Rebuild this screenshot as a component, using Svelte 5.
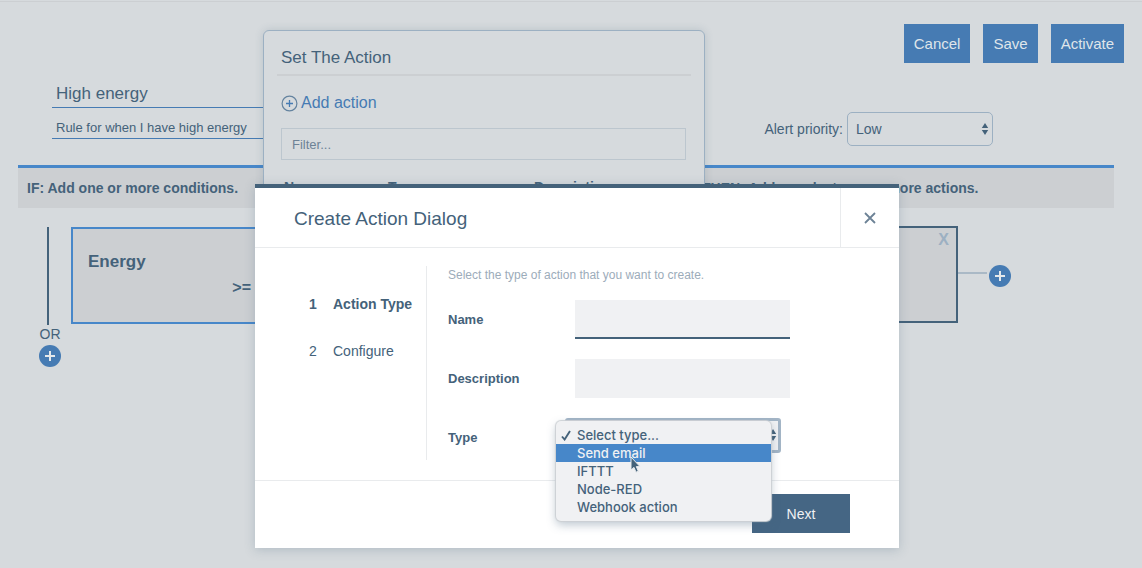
<script>
  let actionName = $state('');
  let actionDescription = $state('');
  let ruleName = $state('High energy');
  let ruleText = $state('Rule for when I have high energy');
  let filter = $state('');
  const types = ['Select type...', 'Send email', 'IFTTT', 'Node-RED', 'Webhook action'];
  const highlighted = 1;
</script>

{#snippet plus()}
  <svg width="22" height="22" viewBox="0 0 22 22" aria-hidden="true">
    <circle cx="11" cy="11" r="11" fill="#467bb3" />
    <path d="M11 6v10M6 11h10" stroke="#e4e8eb" stroke-width="2" />
  </svg>
{/snippet}

{#snippet arrows()}
  <svg class="arrows" width="8" height="14" viewBox="0 0 8 14" aria-hidden="true">
    <path d="M4 1l3.2 5H.8zM4 13L.8 8h6.4z" fill="#44627a" />
  </svg>
{/snippet}

<div class="page">
  <div class="toolbar">
    <button>Cancel</button>
    <button>Save</button>
    <button>Activate</button>
  </div>

  <div class="rule">
    <div class="names">
      <input class="rule-name" aria-label="Rule name" bind:value={ruleName} />
      <input class="rule-text" aria-label="Rule description" bind:value={ruleText} />
    </div>
    <div class="priority">
      <label for="priority">Alert priority:</label>
      <span class="select">
        <select id="priority"><option>Low</option><option>Medium</option><option>High</option></select>
        {@render arrows()}
      </span>
    </div>
  </div>

  <div class="heads">
    <h2>IF: Add one or more conditions.</h2>
    <h2>THEN: Add or select one or more actions.</h2>
  </div>

  <div class="flow">
    <div class="or">
      <div class="stem"></div>
      <span>OR</span>
      <button class="round" aria-label="Add OR condition">{@render plus()}</button>
    </div>
    <div class="card condition">
      <strong>Energy</strong>
      <span class="operator">&gt;=</span>
    </div>
    <div class="card then">
      <button class="remove" aria-label="Remove action">X</button>
    </div>
    <div class="connector"></div>
    <button class="round after" aria-label="Add action">{@render plus()}</button>
  </div>

  <section class="panel">
    <h2>Set The Action</h2>
    <button class="add">
      <svg width="17" height="17" viewBox="0 0 17 17" fill="none" aria-hidden="true">
        <circle cx="8.500" cy="8.500" r="7.400" stroke="#64839f" stroke-width="1.200" />
        <path d="M8.500 5v7M5 8.500h7" stroke="#467bb3" stroke-width="1.300" />
      </svg>
      Add action
    </button>
    <input class="filter" aria-label="Filter actions" placeholder="Filter..." bind:value={filter} />
    <table>
      <thead><tr><th>Name</th><th>Type</th><th>Description</th></tr></thead>
    </table>
  </section>

  <div class="overlay">
    <div class="dialog" role="dialog" aria-labelledby="dialog-title">
      <header>
        <h1 id="dialog-title">Create Action Dialog</h1>
        <button class="close" aria-label="Close">
          <svg width="12" height="12" viewBox="0 0 12 12" aria-hidden="true">
            <path d="M1 1l10 10M11 1L1 11" stroke="#6d8296" stroke-width="1.800" />
          </svg>
        </button>
      </header>
      <div class="body">
        <ol>
          <li class="current"><span>1</span>Action Type</li>
          <li><span>2</span>Configure</li>
        </ol>
        <form>
          <p>Select the type of action that you want to create.</p>
          <div class="field">
            <label for="name">Name</label>
            <input id="name" class="active" bind:value={actionName} />
          </div>
          <div class="field">
            <label for="description">Description</label>
            <input id="description" bind:value={actionDescription} />
          </div>
          <div class="field">
            <label for="type">Type</label>
            <span class="select type">
              <select id="type">{#each types as type}<option>{type}</option>{/each}</select>
              {@render arrows()}
              <ul class="menu" role="listbox" aria-label="Type">
                {#each types as type, i}
                  <li role="option" aria-selected={i === 0} class:highlight={i === highlighted}>
                    <span class="mark">
                      {#if i === 0}
                        <svg width="10" height="11" viewBox="0 0 10 11" fill="none" aria-hidden="true">
                          <path d="M1 6.500L3.600 9.500 9 1" stroke="#44627a" stroke-width="1.900" />
                        </svg>
                      {/if}
                    </span>
                    {type}
                  </li>
                {/each}
              </ul>
              <svg class="pointer" width="11" height="18" viewBox="0 0 11 18" aria-hidden="true">
                <path d="M1 1v13l3-2.600 2 4.800 2.300-1-2-4.600H10z" fill="#44627a" stroke="#e8ebee" stroke-width="1" />
              </svg>
            </span>
          </div>
        </form>
      </div>
      <footer><button class="next">Next</button></footer>
    </div>
  </div>
</div>

<style>
  :global(body) {
    margin: 0;
    background: #d6dadd;
  }
  .page, .page * { box-sizing: border-box; }
  .page {
    position: relative;
    min-height: 100vh;
    padding: 24px 18px 0;
    overflow: hidden;
    color: #44627a;
    background: #d6dadd;
    font: 14px/18px "Liberation Sans", Arial, sans-serif;
  }
  .page::before {
    content: "";
    position: absolute;
    inset: 1px 0 auto;
    height: 1px;
    background: #cccfd2;
  }
  h1, h2, p, ol, ul { margin: 0; padding: 0; font-weight: 400; list-style: none; }
  button, input, select { font: inherit; color: inherit; border: 0; border-radius: 0; padding: 0; margin: 0; background: none; outline: 0; }
  svg { display: block; }

  .toolbar { display: flex; justify-content: flex-end; gap: 13px; }
  .toolbar button {
    height: 39px;
    padding: 0 10px;
    color: #dfe5ea;
    background: #467bb3;
    font-size: 15px;
  }

  .rule { display: flex; justify-content: space-between; padding: 17px 131px 0 34px; }
  .names { display: flex; flex-direction: column; width: 300px; }
  .names input { padding: 0 4px; border-bottom: 1px solid #467bb3; }
  .names .rule-name { height: 28px; font-size: 17px; }
  .names .rule-text { height: 31px; padding-top: 8px; font-size: 13px; }
  .priority { display: flex; align-items: center; gap: 4px; height: 34px; margin-top: 32px; }
  .select { position: relative; display: block; }
  select { appearance: none; width: 146px; height: 34px; padding: 0 8px; border: 1px solid #9cb0c2; border-radius: 5px; }
  .arrows { position: absolute; right: 4px; top: 10px; }

  .heads {
    display: grid;
    grid-template-columns: 684px 1fr;
    align-items: center;
    height: 43px;
    margin: 19px 10px 0 0;
    border-top: 3px solid #4787c9;
    background: #cccfd2;
  }
  .heads h2 { font-size: 14px; font-weight: 700; white-space: nowrap; }
  .heads h2:first-child { padding-left: 9px; }

  .flow { display: flex; padding: 18px 113px 0 19px; }
  .or { display: flex; flex-direction: column; align-items: center; width: 26px; margin: 1px 8px 0 0; }
  .stem { width: 2px; height: 98px; margin-right: 5px; background: #44627a; }
  .or .round { margin-top: 2px; }
  .card { height: 97px; background: #cccfd2; border: 2px solid #44627a; }
  .condition { display: flex; flex-direction: column; width: 260px; margin-top: 1px; padding: 24px 78px 0 15px; border-color: #4787c9; }
  .condition strong { font-size: 17px; }
  .operator { align-self: flex-end; margin-top: 8px; font-size: 16px; font-weight: 700; }
  .then { display: flex; flex: 1; justify-content: flex-end; align-items: flex-start; margin-left: 300px; padding: 3px 7px; }
  .remove { color: #9cb0c2; font-size: 16px; font-weight: 700; }
  .connector { width: 29px; height: 2px; margin: 46px 2px 0 0; background: #aab9c6; }
  .after { align-self: flex-start; margin-top: 39px; }

  .panel {
    position: absolute;
    left: 263px;
    top: 30px;
    width: 442px;
    padding: 15px 13px 40px;
    border: 1px solid #9cb0c2;
    border-radius: 6px;
    background: #d6dadd;
    box-shadow: 0 0 8px rgba(68, 98, 122, .2);
  }
  .panel h2 { height: 30px; padding-left: 4px; border-bottom: 2px solid #cccfd2; font-size: 17px; line-height: 24px; }
  .add { display: flex; align-items: center; gap: 3px; margin: 18px 4px 16px; color: #467bb3; font-size: 16px; }
  .filter { display: block; width: calc(100% - 9px); height: 32px; margin-left: 4px; padding: 0 10px; border: 1px solid #bcc6ce; font-size: 13px; }
  .filter::placeholder { color: #6d8296; opacity: 1; }
  table { width: 100%; margin-top: 18px; border-spacing: 0; table-layout: fixed; }
  th { padding: 0 0 0 7px; text-align: left; font-size: 14px; }
  th:first-child { width: 104px; }
  th:nth-child(2) { width: 146px; }

  .overlay { position: absolute; inset: 0; display: flex; justify-content: center; align-items: flex-start; padding: 184px 0 0 12px; }
  .dialog { width: 644px; border-top: 4px solid #44627a; background: #fff; box-shadow: 0 2px 10px rgba(68, 98, 122, .25); }
  header { display: flex; height: 60px; border-bottom: 1px solid #e9ebed; }
  h1 { flex: 1; padding: 19px 39px 0; font-size: 19px; line-height: 24px; }
  .close { display: grid; place-items: center; width: 59px; border-left: 1px solid #e9ebed; }
  .body { display: flex; padding: 18px 0 20px; border-bottom: 1px solid #e9ebed; }
  ol { width: 172px; padding: 29px 0 0 54px; border-right: 1px solid #e9ebed; }
  ol li { display: flex; height: 47px; }
  ol li span { width: 24px; }
  .current { font-weight: 700; }
  form { flex: 1; padding: 0 0 3px 21px; }
  form p { margin-bottom: 16px; color: #9cacba; font-size: 12px; }
  .field { display: flex; align-items: center; height: 39px; margin-bottom: 20px; }
  .field:last-child { margin-bottom: 0; }
  .field label { width: 127px; font-size: 13px; font-weight: 700; }
  .field input { width: 215px; height: 39px; padding: 0 12px; background: #f0f1f3; }
  .field input.active { border-bottom: 2px solid #44627a; }
  .type { align-self: flex-start; margin-left: -10px; }
  .type select { width: 216px; height: 35px; border: 3px solid #a3b5c6; border-radius: 3px; background: #f0f1f3; }
  .menu {
    position: absolute;
    left: -9px;
    top: 3px;
    width: 215px;
    padding: 5px 0;
    border-radius: 5px;
    background: #f0f1f3;
    box-shadow: 0 0 1px 1px #ccd0d4, 0 4px 10px rgba(68, 98, 122, .35);
    font: 500 13px/18px Inter, sans-serif;
  }
  .menu li { display: flex; align-items: center; padding: 0 5px; }
  .mark { width: 16px; }
  .highlight { color: #f0f1f3; background: #4787c9; }
  .pointer { position: absolute; left: 65px; top: 38px; }
  footer { display: flex; justify-content: flex-end; padding: 13px 49px 15px; }
  .next { width: 98px; height: 39px; color: #f0f1f3; background: #456684; }
</style>
